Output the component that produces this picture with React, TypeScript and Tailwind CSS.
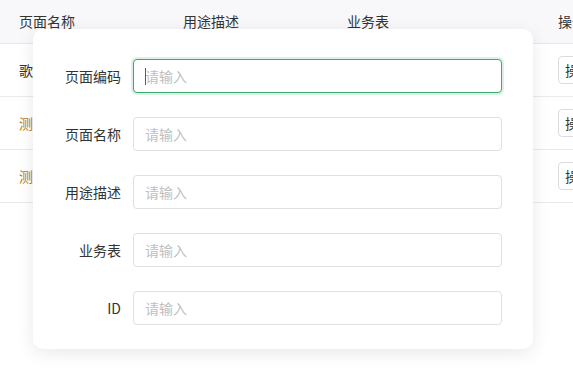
import React from "react";

const rows = [
  { name: "歌曲列表", desc: "歌曲管理页面", table: "song", orange: false },
  { name: "测试页面", desc: "测试用途", table: "test", orange: true },
  { name: "测试页面二", desc: "测试用途", table: "test2", orange: true },
];

const fields = ["页面编码", "页面名称", "用途描述", "业务表", "ID"];

const App = () => {
  return (
    <main
      className="relative w-[573px] h-[381px] overflow-hidden bg-white text-[14px] text-[#333]"
      style={{ fontFamily: '"Noto Sans CJK SC", "Noto Sans", sans-serif' }}>
      {/* table behind the dialog */}
      <div className="w-[700px]">
        <div className="flex h-[44px] items-center bg-[#f8f8fa] border-b border-[#e8e8ec]">
          <div className="w-[164px] pl-[19px]">页面名称</div>
          <div className="w-[164px] pl-[19px]">用途描述</div>
          <div className="w-[164px] pl-[19px]">业务表</div>
          <div className="w-[164px] pl-[66px]">操作</div>
        </div>
        {rows.map((r) => (
          <div
            key={r.name}
            className="flex h-[53px] items-center border-b border-[#ebebef]">
            <div
              className={`w-[164px] pl-[19px] ${r.orange ? "text-[#c27b14]" : "text-[#333]"}`}>
              {r.name}
            </div>
            <div className="w-[164px] pl-[19px]">{r.desc}</div>
            <div className="w-[164px] pl-[19px]">{r.table}</div>
            <div className="w-[164px] pl-[66px]">
              <button className="h-[28px] px-[6px] rounded-[4px] border border-[#dcdce0] bg-white text-[14px] text-[#333]">
                操作
              </button>
            </div>
          </div>
        ))}
      </div>

      {/* dialog */}
      <div className="absolute left-[33px] top-[29px] w-[500px] rounded-[10px] bg-white shadow-[0_4px_18px_rgba(0,0,0,0.09)] pt-[30px] pb-[24px] pr-[31px] flex flex-col gap-[24px]">
        {fields.map((f, i) => (
          <div key={f} className="flex items-center">
            <label className="w-[88px] text-right text-[14px] text-[#333]">
              {f}
            </label>
            <div className="relative ml-[12px] flex-1">
              <input
                placeholder="请输入"
                className={`w-full h-[34px] rounded-[4px] bg-white pl-[11px] text-[14px] outline-none placeholder:text-[#c0c0c0] ${
                  i === 0
                    ? "border border-[#3aa969] ring-2 ring-[#dcf2e4]"
                    : "border border-[#e0e0e4]"
                }`}
              />
              {i === 0 && (
                <span className="absolute left-[12px] top-[9px] h-[17px] w-[1px] bg-[#1f7a45]" />
              )}
            </div>
          </div>
        ))}
      </div>
    </main>
  );
};

export default App;
